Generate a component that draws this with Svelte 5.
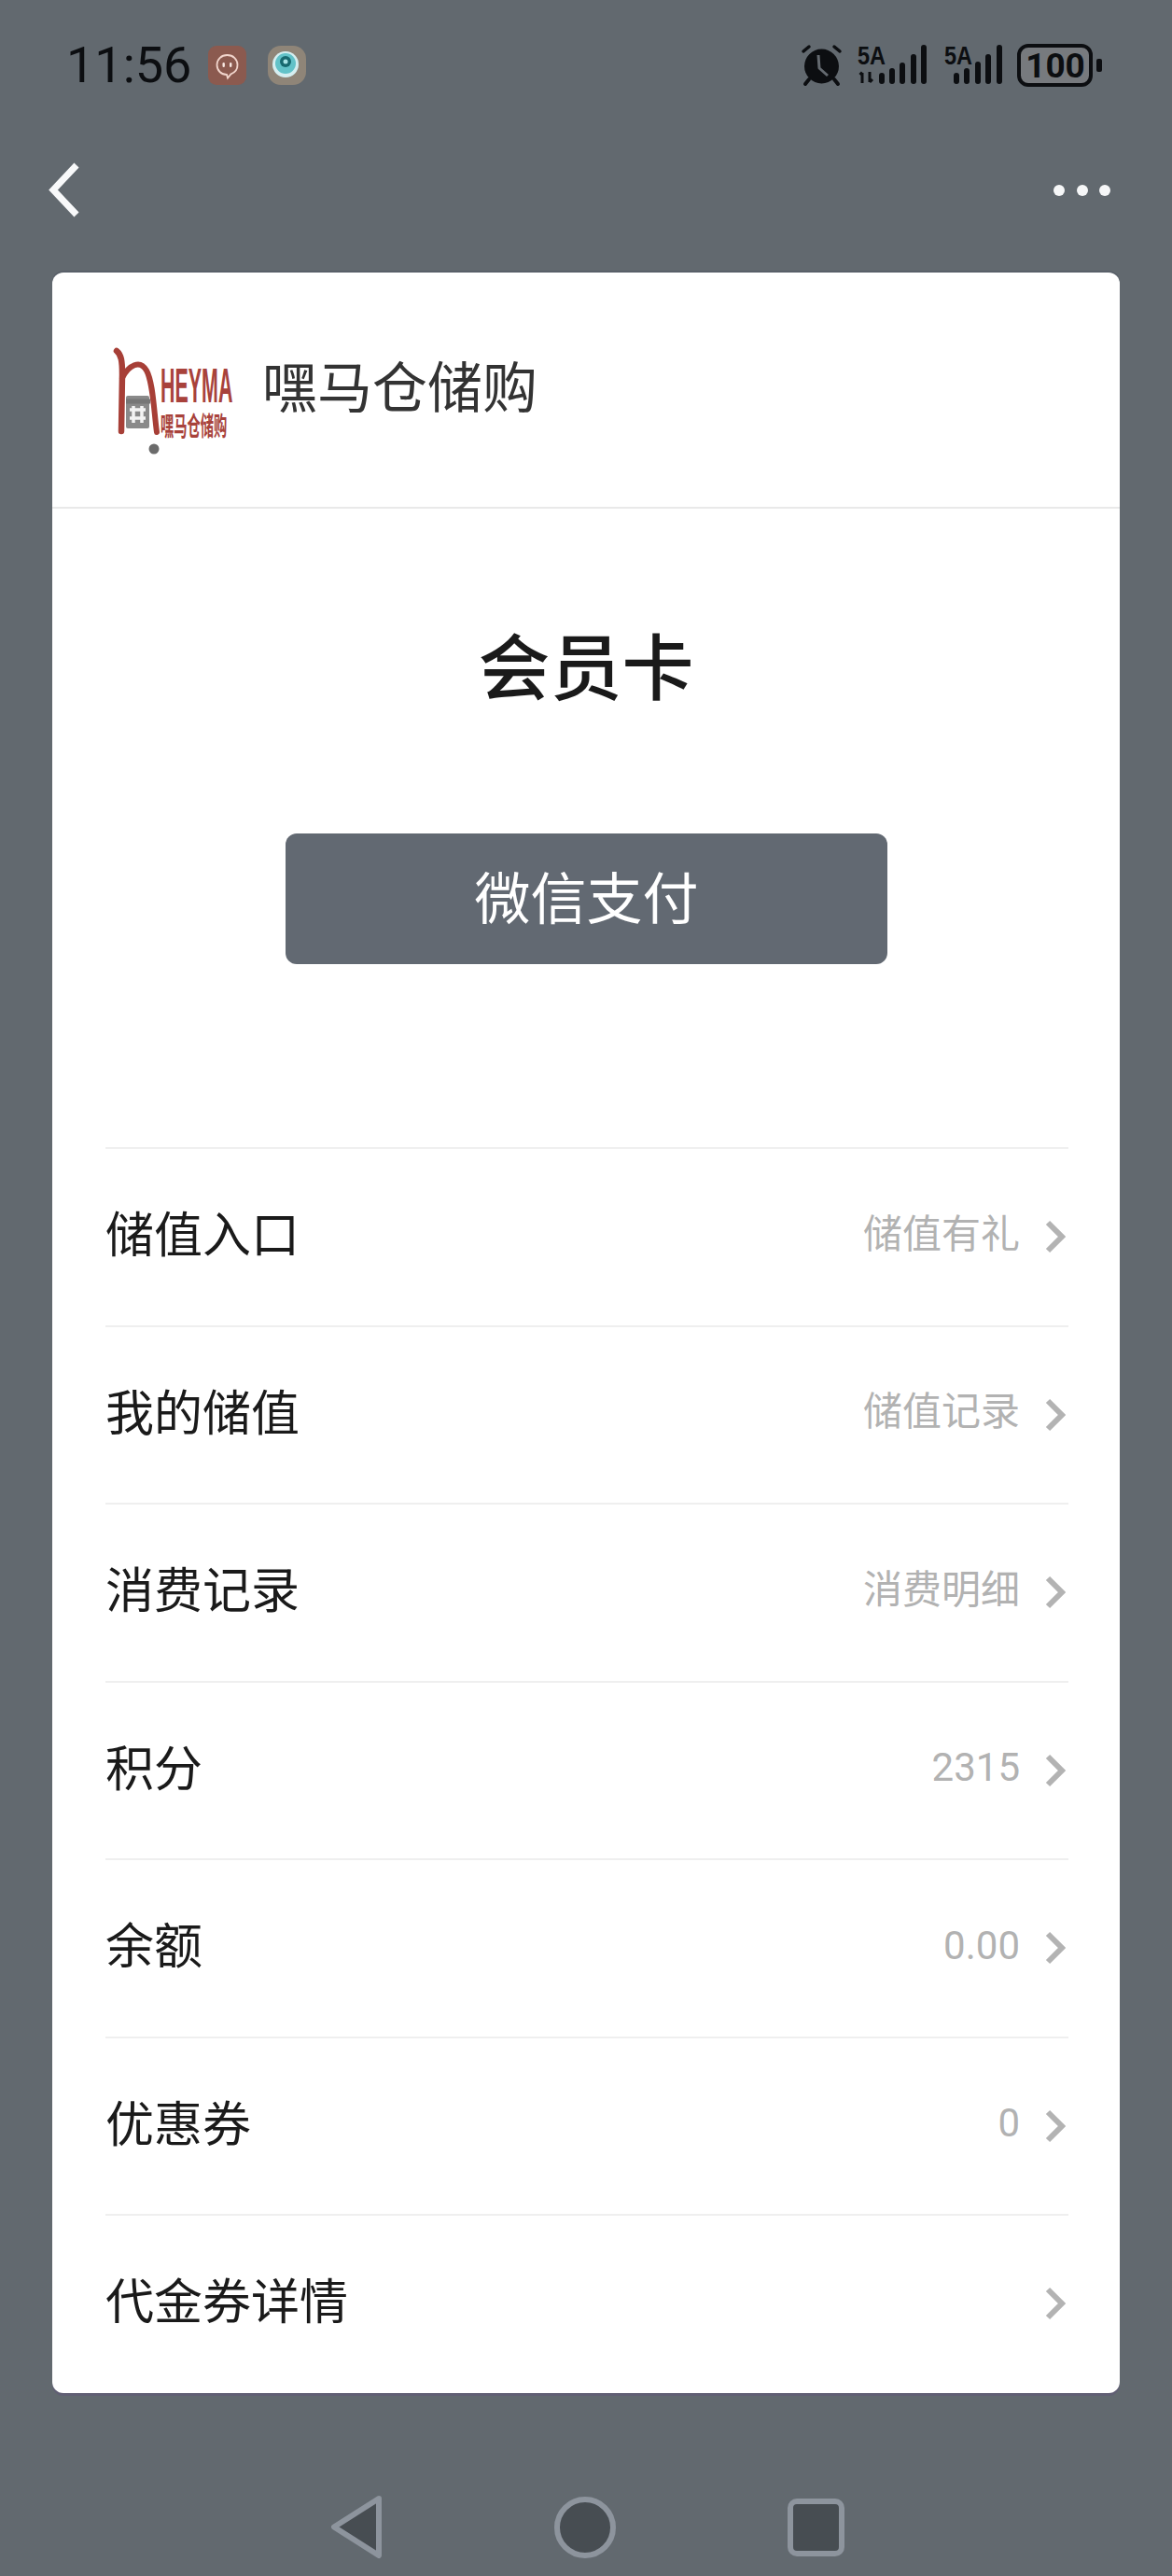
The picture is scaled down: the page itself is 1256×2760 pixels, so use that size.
<script>
  const rows = [
    { label: '储值入口', value: '储值有礼' },
    { label: '我的储值', value: '储值记录' },
    { label: '消费记录', value: '消费明细' },
    { label: '积分', value: '2315' },
    { label: '余额', value: '0.00' },
    { label: '优惠券', value: '0' },
    { label: '代金券详情', value: '' }
  ];
  const bars1 = [[26, 31], [37, 26], [48, 20], [60, 11], [71, 1]];
  const bars2 = [[13, 31], [24, 26], [36, 19], [47, 11], [59, 1]];
</script>

<div class="page">
  <div class="status">
    <div class="status-left">
      <span class="time">11:56</span>
      <svg class="note" width="41" height="42" viewBox="0 0 41 42">
        <rect width="41" height="42" rx="9" fill="#8b5a4f" />
        <path d="M20.500 10c-6.500 0-11 4.600-11 10.500 0 6 4.600 10.500 10.500 10.500l1 3.500 3.500-4.200c4.300-1.500 7-5.200 7-9.800 0-5.900-4.500-10.500-11-10.500z" fill="none" stroke="#f1d5cc" stroke-width="1.800" />
        <rect x="15.500" y="18" width="2.400" height="5" rx="1.200" fill="#f7e7e1" />
        <rect x="23" y="18" width="2.400" height="5" rx="1.200" fill="#f7e7e1" />
      </svg>
      <svg class="note" width="41" height="42" viewBox="0 0 41 42">
        <rect width="41" height="42" rx="14" fill="#8f8578" />
        <circle cx="19" cy="20" r="14" fill="#d5eef0" />
        <circle cx="19" cy="19" r="11" fill="#62c2c8" />
        <circle cx="19" cy="17" r="6" fill="#17696f" />
        <circle cx="19" cy="17" r="2.500" fill="#a6e2e4" />
      </svg>
    </div>
    <div class="status-right">
      <svg width="45" height="46" viewBox="0 0 45 46">
        <circle cx="22.500" cy="24" r="18.500" fill="#0c0e11" />
        <path d="M3 8 9 3M42 8 36 3" stroke="#0c0e11" stroke-width="3.500" stroke-linecap="round" />
        <path d="M9 38 5 43M36 38 40 43" stroke="#0c0e11" stroke-width="4" stroke-linecap="round" />
        <path d="M19 12 20 26 29 34" fill="none" stroke="#646a70" stroke-width="3" stroke-linejoin="round" />
      </svg>
      <svg class="open" width="76" height="46" viewBox="0 0 76 46">
        <text class="net" transform="translate(0 22) scale(.84 1)">5A</text>
        <path d="M5 31v11M2.500 33 5 30.500M13 30v11M13 41l3-3" stroke="#0c0e11" stroke-width="3" fill="none" />
        {#each bars1 as [x, top]}
          <rect x={x - 3} y={top} width="6" height={43 - top} rx="3" fill="#0c0e11" />
        {/each}
      </svg>
      <svg class="open" width="62" height="46" viewBox="0 0 62 46">
        <text class="net" transform="translate(0 22) scale(.84 1)">5A</text>
        {#each bars2 as [x, top]}
          <rect x={x - 3} y={top} width="6" height={43 - top} rx="3" fill="#0c0e11" />
        {/each}
      </svg>
      <svg width="91" height="46" viewBox="0 0 91 46">
        <rect x="2" y="2" width="77" height="42" rx="10" fill="#777a7e" stroke="#0c0e11" stroke-width="4" />
        <rect x="85" y="16" width="6" height="14" rx="2" fill="#0c0e11" />
        <text class="batt" x="41" y="36" text-anchor="middle">100</text>
      </svg>
    </div>
  </div>

  <div class="nav">
    <svg width="33" height="59" viewBox="0 0 33 59">
      <path d="M30 3 5 29.500 30 56" fill="none" stroke="#f8f9fa" stroke-width="7" />
    </svg>
    <div class="dots"><i></i><i></i><i></i></div>
  </div>

  <div class="card">
    <div class="head">
      <svg class="logo" width="150" height="140" viewBox="0 0 150 140">
        <path d="M5 27C10 31 11 38 11 52L10 113" fill="none" stroke="#a73f37" stroke-width="6.500" stroke-linecap="round" />
        <path d="M11 56C18 42 30 36 37 48 44 60 45 92 48 114" fill="none" stroke="#a73f37" stroke-width="6" stroke-linecap="round" />
        <rect x="15" y="75" width="25" height="35" rx="2" fill="#8a8a8a" />
        <path d="M15 81h26" stroke="#777" stroke-width="5" />
        <path d="M19 90h17M19 99h17M23 86v18M32 86v18" stroke="#f3f3f3" stroke-width="3.500" />
        <circle cx="45" cy="132" r="5.500" fill="#6b6b6b" />
        <text class="heyma" transform="translate(52 82) scale(.42 1)">HEYMA</text>
        <text class="heyma-cn" transform="translate(52 118) scale(.51 1)">嘿马仓储购</text>
      </svg>
      <span class="brand">嘿马仓储购</span>
    </div>

    <h1>会员卡</h1>
    <div class="pay">微信支付</div>

    <div class="list">
      {#each rows as row}
        <div class="row">
          <span class="label">{row.label}</span>
          <span class="value">{row.value}</span>
          <svg class="chev" width="22" height="36" viewBox="0 0 22 36">
            <path d="M3 3 18 18 3 33" fill="none" stroke="#b3b3b3" stroke-width="6" />
          </svg>
        </div>
      {/each}
    </div>
  </div>

  <div class="sysnav">
    <svg width="56" height="69" viewBox="0 0 56 69">
      <path d="M52 4 4 34.500 52 65Z" fill="#474d52" stroke="#8d949d" stroke-width="6" stroke-linejoin="round" />
    </svg>
    <svg width="66" height="66" viewBox="0 0 66 66">
      <circle cx="33" cy="33" r="30" fill="#474d52" stroke="#8d949d" stroke-width="6" />
    </svg>
    <svg width="61" height="62" viewBox="0 0 61 62">
      <rect x="3" y="3" width="55" height="56" rx="7" fill="#474d52" stroke="#8d949d" stroke-width="6" />
    </svg>
  </div>
</div>

<style>
  :global(body) {
    margin: 0;
    background: #62696f;
  }
  .page {
    width: 1256px;
    height: 2760px;
    background: #62696f;
    font-family: "Noto Sans CJK SC", "Noto Sans", sans-serif;
    overflow: hidden;
  }
  .status {
    height: 140px;
    padding: 0 75px 0 71px;
    display: flex;
    align-items: center;
    justify-content: space-between;
    box-sizing: border-box;
  }
  .status-left {
    display: flex;
    align-items: center;
  }
  .time {
    font-family: Roboto, sans-serif;
    font-size: 54px;
    line-height: 60px;
    color: #0c0e11;
    width: 152px;
  }
  .note {
    margin-right: 23px;
  }
  .status-right {
    display: flex;
    align-items: center;
    gap: 16.500px;
  }
  .open {
    overflow: visible;
  }
  .net {
    font: 700 28px "Liberation Sans", sans-serif;
    fill: #0c0e11;
  }
  .batt {
    font: 700 37px Roboto, sans-serif;
    fill: #0c0e11;
  }
  .nav {
    height: 127px;
    padding: 0 66px 0 52px;
    display: flex;
    align-items: center;
    justify-content: space-between;
  }
  .dots {
    display: flex;
    gap: 12.500px;
  }
  .dots i {
    width: 12px;
    height: 12px;
    border-radius: 50%;
    background: #f6f7f8;
  }
  .card {
    margin: 25px 56px 0;
    height: 2272px;
    background: #fff;
    border-radius: 12px;
    box-shadow: 0 -2px 0 #596069, 0 3px 0 #615f74;
  }
  .head {
    height: 253px;
    padding-left: 64px;
    box-sizing: border-box;
    display: flex;
    align-items: center;
    border-bottom: 2px solid #e9e9e9;
  }
  .logo {
    margin-top: 2px;
  }
  .heyma {
    font: 700 51px "Liberation Sans", sans-serif;
    fill: #a8423b;
  }
  .heyma-cn {
    font: 700 28px "Noto Sans CJK SC", sans-serif;
    fill: #a8423b;
  }
  .brand {
    margin-left: 11px;
    margin-top: -12px;
    font-size: 59px;
    line-height: 80px;
    color: #333;
  }
  h1 {
    margin: 116px 0 0;
    height: 100px;
    text-align: center;
    font-size: 77px;
    line-height: 100px;
    font-weight: 500;
    color: #1a1a1a;
  }
  .pay {
    margin: 132px 249px 0 250px;
    height: 140px;
    background: #626972;
    border-radius: 12px;
    color: #fff;
    font-size: 60px;
    line-height: 131px;
    text-align: center;
  }
  .list {
    margin: 196px 55px 0 57px;
  }
  .row {
    height: 190.500px;
    box-sizing: border-box;
    border-top: 2px solid #efefef;
    display: flex;
    align-items: center;
  }
  .label {
    flex: 1;
    font-size: 52px;
    line-height: 62px;
    padding-bottom: 10px;
    color: #1a1a1a;
  }
  .value {
    font-family: Roboto, "Noto Sans CJK SC", sans-serif;
    font-size: 42px;
    line-height: 50px;
    padding-bottom: 5px;
    color: #b2b2b2;
    margin-right: 27px;
  }
  .chev {
    margin-right: 3px;
  }
  .sysnav {
    padding: 109px 0 0 3px;
    display: flex;
    justify-content: center;
    align-items: center;
    gap: 184px;
  }
</style>
